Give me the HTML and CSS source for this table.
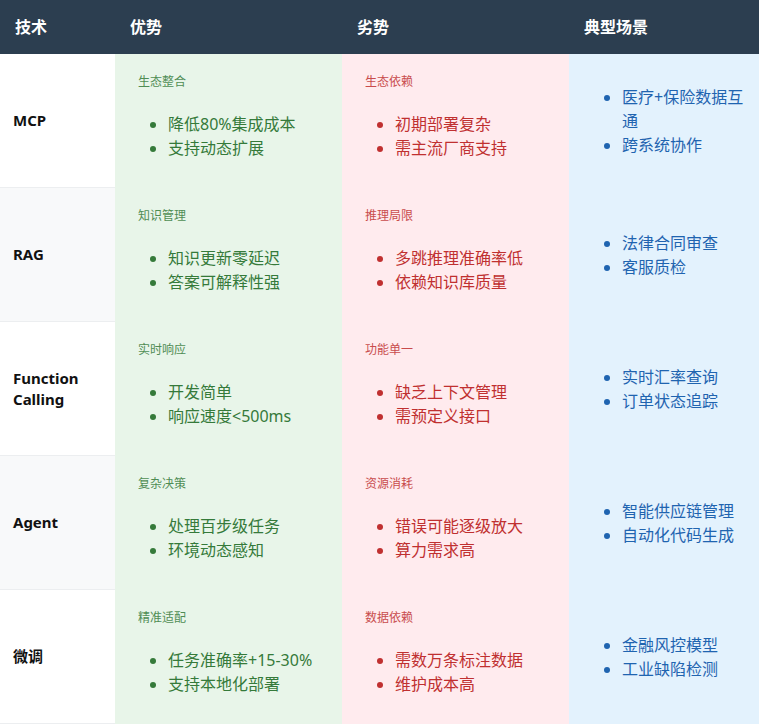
FILE: index.html
```html
<!DOCTYPE html>
<html lang="zh">
<head>
<meta charset="utf-8">
<title>技术对比</title>
<link rel="stylesheet" href="styles.css">
</head>
<body>
<table class="cmp">
  <colgroup>
    <col class="c-tech"><col class="c-pro"><col class="c-con"><col class="c-use">
  </colgroup>
  <thead>
    <tr><th>技术</th><th>优势</th><th>劣势</th><th>典型场景</th></tr>
  </thead>
  <tbody>
    <tr>
      <td class="tech">MCP</td>
      <td class="pro"><div class="tag">生态整合</div><ul><li>降低80%集成成本</li><li>支持动态扩展</li></ul></td>
      <td class="con"><div class="tag">生态依赖</div><ul><li>初期部署复杂</li><li>需主流厂商支持</li></ul></td>
      <td class="use"><ul><li>医疗+保险数据互通</li><li>跨系统协作</li></ul></td>
    </tr>
    <tr class="alt">
      <td class="tech">RAG</td>
      <td class="pro"><div class="tag">知识管理</div><ul><li>知识更新零延迟</li><li>答案可解释性强</li></ul></td>
      <td class="con"><div class="tag">推理局限</div><ul><li>多跳推理准确率低</li><li>依赖知识库质量</li></ul></td>
      <td class="use"><ul><li>法律合同审查</li><li>客服质检</li></ul></td>
    </tr>
    <tr>
      <td class="tech">Function Calling</td>
      <td class="pro"><div class="tag">实时响应</div><ul><li>开发简单</li><li>响应速度&lt;500ms</li></ul></td>
      <td class="con"><div class="tag">功能单一</div><ul><li>缺乏上下文管理</li><li>需预定义接口</li></ul></td>
      <td class="use"><ul><li>实时汇率查询</li><li>订单状态追踪</li></ul></td>
    </tr>
    <tr class="alt">
      <td class="tech">Agent</td>
      <td class="pro"><div class="tag">复杂决策</div><ul><li>处理百步级任务</li><li>环境动态感知</li></ul></td>
      <td class="con"><div class="tag">资源消耗</div><ul><li>错误可能逐级放大</li><li>算力需求高</li></ul></td>
      <td class="use"><ul><li>智能供应链管理</li><li>自动化代码生成</li></ul></td>
    </tr>
    <tr>
      <td class="tech">微调</td>
      <td class="pro"><div class="tag">精准适配</div><ul><li>任务准确率+15-30%</li><li>支持本地化部署</li></ul></td>
      <td class="con"><div class="tag">数据依赖</div><ul><li>需数万条标注数据</li><li>维护成本高</li></ul></td>
      <td class="use"><ul><li>金融风控模型</li><li>工业缺陷检测</li></ul></td>
    </tr>
  </tbody>
</table>
</body>
</html>
```

FILE: styles.css
```css
html, body {
  margin: 0;
  padding: 0;
  background: #ffffff;
}
body {
  font-family: "Noto Sans", "Noto Sans CJK SC", sans-serif;
  color: #222;
}
.cmp {
  width: 759px;
  border-collapse: collapse;
  table-layout: fixed;
}
.c-tech { width: 115px; }
.c-pro { width: 227px; }
.c-con { width: 227px; }
.c-use { width: 190px; }

.cmp th {
  background: #2c3e50;
  color: #ffffff;
  font-size: 16px;
  font-weight: 700;
  line-height: 24px;
  padding: 15px;
  text-align: left;
}
.cmp td {
  border-bottom: 1px solid #eceef0;
  vertical-align: middle;
  padding: 19px 15px 27px;
}
.cmp tr.alt td.tech { background: #f8f9fa; }
.cmp td.tech {
  background: #ffffff;
  font-weight: 700;
  font-size: 15px;
  line-height: 21px;
  color: #111;
  padding: 0 14px 0 13px;
}
.cmp td.pro { background: #e8f5e9; color: #357a3a; border-bottom-color: #e8f5e9; }
.cmp td.con { background: #ffebee; color: #c03030; border-bottom-color: #ffebee; }
.cmp td.use { background: #e3f2fd; color: #1f64b0; border-bottom-color: #e3f2fd; padding: 0 10px 0 15px; }

.tag {
  font-size: 12px;
  line-height: 18px;
  padding-left: 8px;
  margin-bottom: 21px;
  opacity: 0.85;
}
.cmp ul {
  margin: 0;
  padding-left: 38px;
  font-size: 16px;
  line-height: 24px;
}
```
